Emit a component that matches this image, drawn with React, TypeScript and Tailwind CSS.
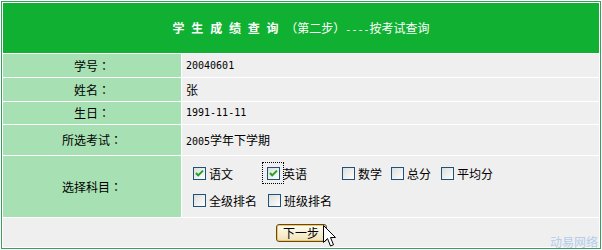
const cjk = "font-['Noto_Sans_CJK_SC',sans-serif]";

function Num({ children }: { children: React.ReactNode }) {
  return <span className="font-['DejaVu_Sans_Mono',monospace] text-[10px]">{children}</span>;
}

function Colon() {
  return <span className="font-['Noto_Sans_CJK_TC',sans-serif]">：</span>;
}

function Box({ checked, focus }: { checked?: boolean; focus?: boolean }) {
  return (
    <span className="relative block w-[13px] h-[13px] shrink-0">
      <svg width="13" height="13" viewBox="0 0 13 13" className="block">
        <defs>
          <linearGradient id="xpbox" x1="0" y1="0" x2="1" y2="1">
            <stop offset="0" stopColor="#dcdcd7" />
            <stop offset="1" stopColor="#ffffff" />
          </linearGradient>
        </defs>
        <rect x="0.5" y="0.5" width="12" height="12" fill="url(#xpbox)" stroke="#1c5180" />
        {checked && (
          <path d="M3 6 L5.2 8.4 L10 3.6" fill="none" stroke="#21a121" strokeWidth="2" />
        )}
      </svg>
      {focus && (
        <span className="absolute -left-[5px] -top-[5px] w-[22px] h-[22px] border border-dotted border-black" />
      )}
    </span>
  );
}

function Item({ label, checked, focus, w }: { label: string; checked?: boolean; focus?: boolean; w: string }) {
  return (
    <label className={`flex items-center ${w}`}>
      <Box checked={checked} focus={focus} />
      <span className="ml-[3px]">{label}</span>
    </label>
  );
}

function Row({ label, children, h }: { label: string; children: React.ReactNode; h: string }) {
  return (
    <>
      <div className={`${h} bg-[#a7e1b3] flex items-center justify-center`}>
        {label}
        <Colon />
      </div>
      <div className={`${h} bg-[#efefef] flex items-center pl-[4px]`}>{children}</div>
    </>
  );
}

export default function App() {
  return (
    <div className={`w-[602px] h-[250px] bg-white pt-[1px] pl-[1px] text-[12px] leading-none text-black ${cjk}`}>
      <div className="relative w-[600px] h-[248px] border border-[#3c9e5e] p-[1px]">
        <div className="grid grid-cols-[178px_417px] gap-[1px]">
          <div className="col-span-2 h-[50px] bg-[#10b132] flex items-center justify-center text-white">
            <span className="font-bold tracking-[6.8px]">学生成绩查询</span>
            <span>（第二步）<Num>----</Num>按考试查询</span>
          </div>
          <Row label="学号" h="h-[23px]"><Num>20040601</Num></Row>
          <Row label="姓名" h="h-[23px]">张</Row>
          <Row label="生日" h="h-[22px]"><Num>1991-11-11</Num></Row>
          <Row label="所选考试" h="h-[30px]"><span><Num>2005</Num>学年下学期</span></Row>
          <div className="h-[61px] bg-[#a7e1b3] flex items-center justify-center">
            选择科目<Colon />
          </div>
          <div className="h-[61px] bg-[#efefef] flex flex-col justify-center gap-[14px] pl-[11px] pt-[1px]">
            <div className="flex items-center">
              <Item label="语文" checked w="w-[74px]" />
              <Item label="英语" checked focus w="w-[75px]" />
              <Item label="数学" w="w-[49px]" />
              <Item label="总分" w="w-[50px]" />
              <Item label="平均分" w="w-auto" />
            </div>
            <div className="flex items-center">
              <Item label="全级排名" w="w-[75px]" />
              <Item label="班级排名" w="w-auto" />
            </div>
          </div>
          <div className="col-span-2 h-[29px] bg-[#efefef] flex items-center justify-center">
            <button className="relative w-[51px] h-[18px] rounded-[3px] border border-[#5c4a28] bg-gradient-to-b from-[#fffdf4] to-[#f1e2b4] shadow-[inset_0_0_0_1px_#f9c552] flex items-center justify-center text-[12px] leading-none">
              下一步
            </button>
          </div>
        </div>
        <span className="absolute right-[2px] bottom-0 text-[12px] text-[#b3cdea] leading-none">动易网络</span>
        <svg className="absolute left-[321px] top-[223px]" width="14" height="24" viewBox="0 0 14 24">
          <path d="M0.5 0.5 L0.5 17.5 L4.5 13.5 L7.5 21 L10.5 19.8 L7.5 12.5 L12.5 12.5 Z" fill="#ffffff" stroke="#000000" strokeWidth="1" strokeLinejoin="miter" />
        </svg>
      </div>
    </div>
  );
}
